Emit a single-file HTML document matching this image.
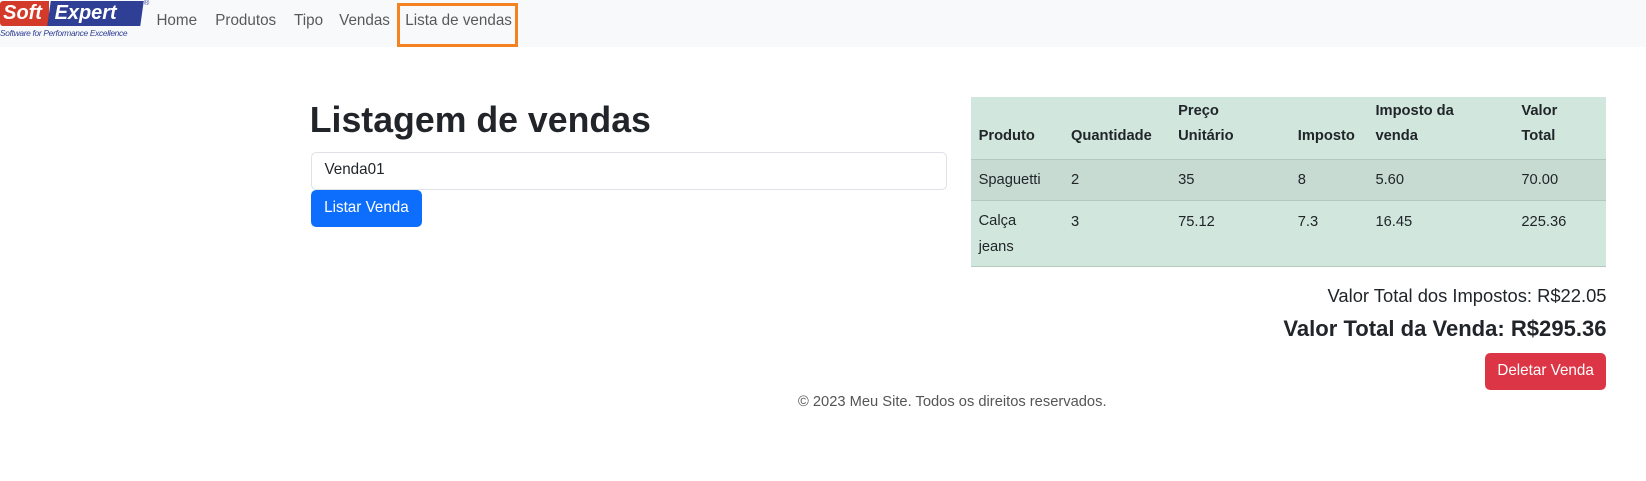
<!DOCTYPE html>
<html><head><meta charset="utf-8"><style>
html,body{margin:0;padding:0;width:1646px;height:481px;overflow:hidden;background:#fff;}
#w{position:relative;width:1568px;height:458px;zoom:1.05;font-family:"Liberation Sans",sans-serif;color:#212529;}
.a{position:absolute;white-space:nowrap;}
nav{position:absolute;left:0;top:0;width:1568px;height:45px;background:#f8f9fa;}
.nl{position:absolute;top:11px;font-size:14.5px;color:rgba(0,0,0,.65);}
table{position:absolute;left:925px;top:92px;width:605px;border-collapse:collapse;font-size:14px;table-layout:fixed;}
td,th{padding:0 7px;text-align:left;}
th{font-weight:bold;vertical-align:bottom;padding-bottom:9px;line-height:24px;background:#d1e7dd;}
tr{border-bottom:1px solid #b5c9c0;}
</style></head><body><div id="w">
<nav>
 <div class="a" style="left:0;top:1px;width:138px;height:24px;">
  <div class="a" style="left:0;top:0;width:47px;height:24px;background:#d43a2a;border-radius:3px 0 0 3px;"></div>
  <div class="a" style="left:47px;top:0;width:89px;height:24px;background:#2e3f95;transform:skewX(-8deg);"></div>
  <div class="a" style="left:3px;top:1px;font:italic bold 19px 'Liberation Sans',sans-serif;color:#fff;">Soft</div>
  <div class="a" style="left:52px;top:1px;font:italic bold 19px 'Liberation Sans',sans-serif;color:#fff;">Expert</div>
 </div>
 <div class="a" style="left:137px;top:-2px;font-size:7px;color:#2e3f95;">®</div>
 <div class="a" style="left:0;top:27px;font:italic 8px 'Liberation Sans',sans-serif;color:#2e3f95;letter-spacing:-0.3px;">Software for Performance Excellence</div>
 <div class="nl" style="left:149px">Home</div>
 <div class="nl" style="left:205px">Produtos</div>
 <div class="nl" style="left:280px">Tipo</div>
 <div class="nl" style="left:323px">Vendas</div>
 <div class="a" style="left:378px;top:3px;width:110px;height:36px;border:3px solid #f58220;"></div>
 <div class="nl" style="left:386px">Lista de vendas</div>
</nav>
<div class="a" style="left:295px;top:95px;font-size:34px;font-weight:bold;">Listagem de vendas</div>
<div class="a" style="left:296px;top:145px;width:604px;height:34px;border:1px solid #dee2e6;border-radius:5px;"></div>
<div class="a" style="left:309px;top:153px;font-size:14.5px;">Venda01</div>
<div class="a" style="left:296px;top:181px;width:106px;height:35px;background:#0d6efd;border-radius:5px;color:#fff;font-size:14.5px;line-height:35px;text-align:center;">Listar Venda</div>
<table>
<colgroup><col style="width:88px"><col style="width:102px"><col style="width:114px"><col style="width:74px"><col style="width:139px"><col style="width:88px"></colgroup>
<tr style="height:60px"><th>Produto</th><th>Quantidade</th><th>Preço<br>Unitário</th><th>Imposto</th><th>Imposto da<br>venda</th><th>Valor<br>Total</th></tr>
<tr style="height:39px;background:#c7dbd2"><td>Spaguetti</td><td>2</td><td>35</td><td>8</td><td>5.60</td><td>70.00</td></tr>
<tr style="height:63px;background:#d1e7dd"><td style="vertical-align:top;line-height:24px;padding-top:8px">Calça<br>jeans</td><td style="vertical-align:top;padding-top:12px">3</td><td style="vertical-align:top;padding-top:12px">75.12</td><td style="vertical-align:top;padding-top:12px">7.3</td><td style="vertical-align:top;padding-top:12px">16.45</td><td style="vertical-align:top;padding-top:12px">225.36</td></tr>
</table>
<div class="a" style="right:38px;top:271px;font-size:17.5px;">Valor Total dos Impostos: R$22.05</div>
<div class="a" style="right:38px;top:301px;font-size:21px;font-weight:bold;">Valor Total da Venda: R$295.36</div>
<div class="a" style="left:1414px;top:336px;width:116px;height:35px;background:#dc3545;border-radius:5px;color:#fff;font-size:14.5px;line-height:35px;text-align:center;">Deletar Venda</div>
<div class="a" style="left:760px;top:375px;font-size:14px;color:#555;">© 2023 Meu Site. Todos os direitos reservados.</div>
</div></body></html>
